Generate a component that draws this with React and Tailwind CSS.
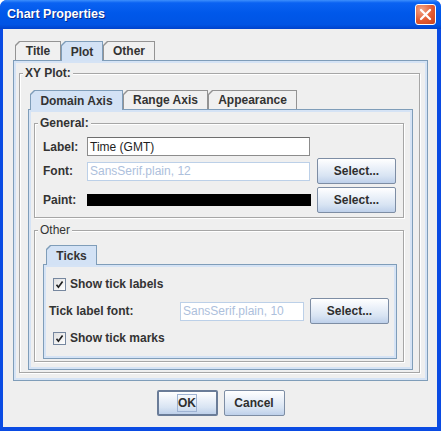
import React from "react";

const Tab = ({ label, w, selected }) => {
  return (
    <div
      className={`${w} ${
        selected ? "relative z-10 -mb-px h-[20px] bg-[#7f9db9]" : "h-[19px] bg-[#939393]"
      } px-px pt-px [clip-path:polygon(4px_0,100%_0,100%_100%,0_100%,0_4px)]`}
    >
      <div
        className={`flex h-full items-center justify-center font-bold ${
          selected ? "bg-[#d3e2f5]" : "bg-[#f0f0f0]"
        } [clip-path:polygon(4px_0,100%_0,100%_100%,0_100%,0_4px)]`}
      >
        {label}
      </div>
    </div>
  );
};

const Panel = ({ className, children }) => (
  <div
    className={`border border-[#7f9db9] bg-[#efefef] shadow-[inset_0_0_0_2px_#d5e3f5] ${className}`}
  >
    {children}
  </div>
);

const Group = ({ title, bold = true, className, children }) => (
  <fieldset
    className={`border border-[#a6a6a6] shadow-[inset_1px_1px_0_#fff,1px_1px_0_#fff] ${className}`}
  >
    <legend
      className={`-ml-[5px] bg-[#efefef] px-[2px] leading-[14px] ${bold ? "font-bold" : ""}`}
    >
      {title}
    </legend>
    {children}
  </fieldset>
);

const Button = ({ w = "w-[79px]", border = "border border-[#7d8da4]", className = "", children }) => (
  <button
    className={`flex h-[26px] ${w} items-center justify-center rounded-[2px] ${border} bg-[linear-gradient(to_bottom,#ffffff_0%,#f1f5fb_25%,#d8e4f3_70%,#bed0ea_100%)] font-bold text-[#2e2e2e] ${className}`}
  >
    {children}
  </button>
);

const Check = () => (
  <span className="flex h-[13px] w-[13px] items-center justify-center border border-[#76879f] bg-[linear-gradient(135deg,#dedede,#ffffff)]">
    <svg width="9" height="9" viewBox="0 0 9 9">
      <path d="M1.5 4.8 L3.4 7.2 L7.6 1.6" stroke="#222" strokeWidth="1.7" fill="none" />
    </svg>
  </span>
);

const Disabled = ({ w, children }) => (
  <div
    className={`${w} flex h-[19px] items-center border border-[#bcd0e8] bg-white px-[2px] font-normal text-[#adc0dc]`}
  >
    {children}
  </div>
);

export default function App() {
  return (
    <div className="h-[431px] w-[441px] bg-white font-['Liberation_Sans',Arial,sans-serif] text-[12px] text-[#333]">
      <div className="flex h-full flex-col overflow-hidden rounded-t-[7px] bg-[#0a4be3]">
        {/* title bar */}
        <div className="flex h-[29px] items-center justify-between bg-[linear-gradient(to_bottom,#3d8ffc_0%,#0a62f2_10%,#0058ea_45%,#0054e4_85%,#0042cc_100%)] pl-[7px] pr-[5px]">
          <span className="text-[12.5px] font-bold text-white [text-shadow:1px_1px_0_#0a2a8c]">
            Chart Properties
          </span>
          <div className="flex h-[21px] w-[21px] items-center justify-center rounded-[3px] border border-white bg-[radial-gradient(circle_at_30%_25%,#f3a689,#e25a31_55%,#c9431d)]">
            <svg width="13" height="13" viewBox="0 0 13 13">
              <path
                d="M2 2 L11 11 M11 2 L2 11"
                stroke="white"
                strokeWidth="2.3"
                strokeLinecap="round"
              />
            </svg>
          </div>
        </div>

        {/* body */}
        <div className="mb-[4px] ml-[3px] mr-[4px] flex flex-1 flex-col bg-[#efefef] pl-[10px] pr-[9px] pt-[12px]">
          <div className="flex h-[19px] items-end pl-[2px]">
            <Tab label="Title" w="w-[46px]" />
            <Tab label="Plot" w="w-[42px]" selected />
            <Tab label="Other" w="w-[52px]" />
          </div>
          <Panel className="h-[321px] pl-[5px] pr-[7px] pt-[5px]">
            <Group title="XY Plot:" className="pb-[2px] pl-[8px] pr-[6px]">
              <div className="mt-[10px] flex h-[19px] items-end pl-[2px]">
                <Tab label="Domain Axis" w="w-[93px]" selected />
                <Tab label="Range Axis" w="w-[85px]" />
                <Tab label="Appearance" w="w-[89px]" />
              </div>
              <Panel className="flex h-[261px] flex-col gap-[5px] pl-[5px] pr-[8px] pt-[6px]">
                <Group title="General:" className="pb-[4px] pl-[8px] pr-[6px]">
                  <div className="mt-[7px] flex h-[19px] items-center">
                    <span className="w-[44px] font-bold">Label:</span>
                    <div className="flex h-[19px] w-[223px] items-center border border-[#8c8c8c] border-t-[#6e6e6e] bg-white px-[2px] text-[#1e1e1e]">
                      Time (GMT)
                    </div>
                  </div>
                  <div className="mt-[2px] flex h-[26px] items-center">
                    <span className="w-[44px] font-bold">Font:</span>
                    <Disabled w="w-[223px]">SansSerif.plain, 12</Disabled>
                    <Button className="ml-[7px]">Select...</Button>
                  </div>
                  <div className="mt-[3px] flex h-[26px] items-center">
                    <span className="w-[44px] font-bold">Paint:</span>
                    <div className="h-[12px] w-[224px] bg-black" />
                    <Button className="ml-[6px]">Select...</Button>
                  </div>
                </Group>
                <Group title="Other" bold={false} className="pb-[2px] pl-[8px] pr-[6px]">
                  <div className="mt-[8px] flex h-[19px] items-end pl-[3px]">
                    <Tab label="Ticks" w="w-[51px]" selected />
                  </div>
                  <Panel className="flex h-[95px] flex-col pt-[11px]">
                    <label className="flex h-[16px] items-center gap-[4px] pl-[9px] font-bold">
                      <Check />
                      Show tick labels
                    </label>
                    <div className="mt-[6px] flex h-[26px] items-center pl-[5px]">
                      <span className="w-[131px] font-bold">Tick label font:</span>
                      <Disabled w="w-[124px]">SansSerif.plain, 10</Disabled>
                      <Button className="ml-[6px]">Select...</Button>
                    </div>
                    <label className="mt-[6px] flex h-[16px] items-center gap-[4px] pl-[9px] font-bold">
                      <Check />
                      Show tick marks
                    </label>
                  </Panel>
                </Group>
              </Panel>
            </Group>
          </Panel>

          <div className="mt-[9px] flex justify-center gap-[6px]">
            <Button w="w-[61px]" border="border-2 border-[#6a7c98]">
              <span className="flex h-[18px] w-[20px] items-center justify-center border border-[#9fb3d3]">
                OK
              </span>
            </Button>
            <Button w="w-[61px]">Cancel</Button>
          </div>
        </div>
      </div>
    </div>
  );
}
